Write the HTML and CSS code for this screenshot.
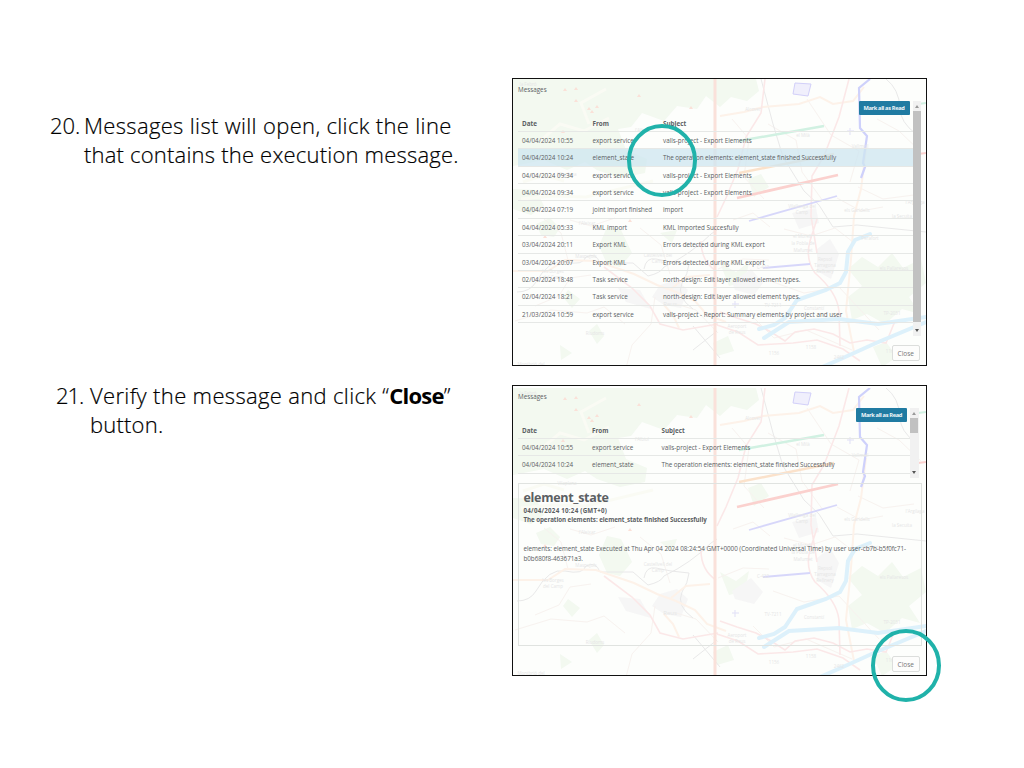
FILE: index.html
```
<!DOCTYPE html>
<html lang="en">
<head>
<meta charset="utf-8">
<title>Messages guide</title>
<link rel="stylesheet" href="styles.css">
</head>
<body>
<svg class="defs" width="0" height="0" aria-hidden="true">
<defs>
<symbol id="map" viewBox="0 0 413 289">
<rect width="413" height="289" fill="#fdfefc"/>
<g fill="#f1f8ee">
<path d="M0 0H210V10L193 17L184 30L164 27L151 42L129 34L118 48L105 50L113 71L134 80L132 94L107 99L84 91L72 83L54 91L31 81L0 87Z"/>
<path d="M202 0H243L246 12L234 22L218 18L207 28L193 17ZM0 110L23 111L31 127L18 136L0 130ZM23 145L37 139L47 149L41 158L28 156ZM94 148L108 151L119 174L107 188L94 185L86 167ZM207 184L223 193L236 183L232 203L216 207ZM335 190L349 178L365 188L379 174L390 189L408 180L413 204L396 218L407 235L389 230L372 245L354 235L339 241L335 218L349 207ZM235 100L248 95L256 108L241 118ZM55 211L67 220L59 229L50 218ZM47 266L59 274L48 281ZM76 252L84 245L91 257L84 265ZM200 264L215 257L221 272L204 277ZM360 268L373 263L384 278L369 288ZM147 154L164 151L159 164Z"/>
</g>
<g fill="#f5f5f5">
<path d="M147 206L164 201L175 211L168 229L151 226L139 218ZM105 209L127 211L138 230L113 223ZM219 203L238 190L250 204L241 216L222 211ZM304 170L317 160L326 175L318 200L304 192ZM279 134L303 129L306 144L286 150Z"/>
</g>
<g fill="none" stroke="#fafbf3" stroke-width="3">
<path d="M28 61L47 45L71 52L96 39M93 10L68 24L76 45M8 120L40 117L73 118L140 102M10 103L31 96L51 102"/>
</g>
<g fill="none" stroke="#f7f1ed">
<path d="M31 140L48 154L55 181M22 227L46 217L57 199L78 196M2 242L38 231L74 234L91 228L112 245M57 141L78 147L102 139M127 149L148 166L157 195M163 225L183 231L205 254M142 218L138 245L119 266L113 289M205 190L230 180L256 181M219 40L236 60L231 98L251 120M294 20L318 56L346 72L337 103M364 40L386 52L408 73M345 108L370 120L401 116M324 119L348 132L370 128M255 45L283 61L289 93L310 122M271 150L298 157L322 149L340 163M220 141L240 134L257 148M240 238L261 259L293 251L339 271M260 203L291 214L326 208L366 251"/>
</g>
<g fill="none" stroke="#e6e6e6">
<path d="M4 213Q17 213 23 203Q36 180 52 183Q70 187 73 178Q83 173 87 184L120 184L135 197Q148 194 151 188Q178 175 198 155L204 151M131 190Q133 178 143 180L158 183L176 185Q175 195 169 204Q163 218 180 230M180 247L207 279M180 271L204 252"/>
<path d="M248 0L260 45L270 78L291 112L306 126L320 148L344 146L413 153"/>
<path d="M373 0Q386 10 387 29Q387 43 403 55"/>
</g>
<g fill="none" stroke="#fdf0e6" stroke-width="2">
<path d="M0 192L35 192L52 181L83 182L121 195L144 206L163 213L182 222L194 236L213 243"/>
<path d="M207 37L231 33L250 28L286 25L307 18L320 25L340 22L351 8M158 210L173 198L197 196M151 226L160 236L166 249M353 70L348 110L341 137L338 180L333 232L341 273"/>
</g>
<g fill="none" stroke="#fbe5e5" stroke-width="1.6">
<path d="M91 188L119 209L137 227L147 245L170 251L205 245M207 233L224 239L243 245L258 253L272 262L282 253L301 250L320 255L337 264L354 261L373 264L382 242M204 246L225 253L245 266L280 264L304 261L330 270L347 282"/>
<path d="M252 0L248 34L233 58L225 90L213 119L204 138M336 0L326 38L311 77L299 97L298 137L304 174M304 140L297 162Q292 180 302 194Q324 213 326 232L327 267"/>
<path d="M188 162Q188 182 203 192"/>
</g>
<path d="M202 0V289" stroke="#fadcd4" stroke-width="3"/>
<g fill="none" stroke="#d8effb" stroke-width="4" stroke-linecap="round">
<path d="M357 155L342 161L335 173L333 193L327 204L313 211L284 221L272 239L261 246L246 250M251 259L276 243L326 240L365 245L413 238M307 289L330 279L363 264L413 243"/>
</g>
<path d="M226 62L311 47" stroke="#c9efdd" stroke-width="2.5"/>
<path d="M226 94L321 75" stroke="#fbdec3" stroke-width="2.5"/>
<path d="M224 119L325 96" stroke="#fbcac6" stroke-width="2.8"/>
<path d="M236 142L324 117M250 189L297 185" stroke="#d1d1fa" stroke-width="1.8"/>
<path d="M357 0L346 9L347 49L354 57L350 84L352 88L348 99" fill="none" stroke="#c6c9fb" stroke-width="2.2"/>
<path d="M282 4L298 5L295 17L280 15Z" fill="#eeedfc" stroke="#cbc8f9"/>
<g fill="#fbdcd2"><path d="M52 9l2 3h-4zM63 20l2 3h-4zM76 28l2 3h-4zM84 26l2 3h-4zM79 31l2 3h-4zM50 51l2 3h-4zM63 8l2 3h-4zM126 15l2 3h-4zM178 27l2 3h-4zM32 156l2 3h-4zM117 140l2 3h-4z"/></g>
<path d="M405 25l8 -1" stroke="#c9efdd" stroke-width="2"/>
<path d="M405 75l8 -1" stroke="#fbcac6" stroke-width="2"/>
<path d="M337 49v7M334 52h7M222 222v7M219 225h7" stroke="#dcdbf6"/>
<g class="place" text-anchor="middle">
<text x="15" y="7">la Febró</text><text x="54" y="97">Vilaplana</text><text x="129" y="53">l'Albiol</text><text x="74" y="146">l'Aleixar</text><text x="240" y="32">Alcover</text><text x="290" y="58">el Milà</text><text x="347" y="69">Vallmoll</text><text x="289" y="129">Vilallonga del</text><text x="289" y="135">Camp</text><text x="344" y="133">els Garidells</text><text x="389" y="139">la Secuita</text><text x="402" y="125">l'Argilaga</text><text x="73" y="179">Maspujols</text><text x="145" y="178">Castellvell del</text><text x="145" y="184">Camp</text><text x="40" y="194">les Borges</text><text x="40" y="200">del Camp</text><text x="157" y="227" font-size="6">Reus</text><text x="82" y="256">Riudoms</text><text x="18" y="287">Montbrió del</text><text x="289" y="159">el Morell</text><text x="290" y="166">la Pobla de</text><text x="290" y="173">Mafumet</text><text x="312" y="182">Repsol</text><text x="312" y="188">Tarragona</text><text x="312" y="194">Refinery</text><text x="357" y="161">Perafort</text><text x="381" y="191">els Pallaresos</text><text x="250" y="190">C-422</text><text x="260" y="228">TV-7211</text><text x="301" y="231">Constantí</text><text x="379" y="236">TP-2031</text><text x="224" y="249">Aeroport</text><text x="224" y="255">de Reus</text><text x="261" y="276">1156</text><text x="298" y="270">1158</text><text x="326" y="280">2462</text><text x="378" y="274">1164</text>
</g>
</symbol>
</defs>
</svg>
<main class="page">
<section class="step">
<div class="copy first">
<span class="num">20.</span>
<p><span class="l1">Messages list will open, click the line</span><br><span class="l2">that contains the execution message.</span></p>
</div>
<div class="panel one">
<svg class="map"><use href="#map" width="413" height="289"/></svg>
<div class="content">
<div class="caption">Messages</div>
<div class="list">
<div class="table">
<div class="tools"><button class="mark">Mark all as Read</button></div>
<div class="row head"><span>Date</span><span>From</span><span>Subject</span></div>
<div class="row"><span>04/04/2024 10:55</span><span>export service</span><span>valls-project - Export Elements</span></div>
<div class="row active"><span>04/04/2024 10:24</span><span>element_state</span><span class="long">The operation elements: element_state finished Successfully</span></div>
<div class="row"><span>04/04/2024 09:34</span><span>export service</span><span>valls-project - Export Elements</span></div>
<div class="row"><span>04/04/2024 09:34</span><span>export service</span><span>valls-project - Export Elements</span></div>
<div class="row"><span>04/04/2024 07:19</span><span>joint import finished</span><span>import</span></div>
<div class="row"><span>04/04/2024 05:33</span><span>KML Import</span><span>KML Imported Succesfully</span></div>
<div class="row"><span>03/04/2024 20:11</span><span>Export KML</span><span>Errors detected during KML export</span></div>
<div class="row"><span>03/04/2024 20:07</span><span>Export KML</span><span>Errors detected during KML export</span></div>
<div class="row"><span>02/04/2024 18:48</span><span>Task service</span><span>north-design: Edit layer allowed element types.</span></div>
<div class="row"><span>02/04/2024 18:21</span><span>Task service</span><span>north-design: Edit layer allowed element types.</span></div>
<div class="row"><span>21/03/2024 10:59</span><span>export service</span><span>valls-project - Report: Summary elements by project and user</span></div>
</div>
<div class="scroll"><i class="up"></i><i class="thumb"></i><i class="down"></i></div>
</div>
<div class="footer"><button class="close">Close</button></div>
</div>
<svg class="ring" viewBox="0 0 70 73"><ellipse cx="35" cy="36.5" rx="33" ry="34.5"/></svg>
</div>
</section>
<section class="step">
<div class="copy second">
<span class="num">21.</span>
<p><span class="l1">Verify the message and click “<b>Close</b>”</span><br><span class="l2">button.</span></p>
</div>
<div class="panel two">
<svg class="map"><use href="#map" y="2" width="413" height="289"/></svg>
<div class="content">
<div class="caption">Messages</div>
<div class="list">
<div class="table">
<div class="tools"><button class="mark">Mark all as Read</button></div>
<div class="row head"><span>Date</span><span>From</span><span>Subject</span></div>
<div class="row"><span>04/04/2024 10:55</span><span>export service</span><span>valls-project - Export Elements</span></div>
<div class="row"><span>04/04/2024 10:24</span><span>element_state</span><span class="long">The operation elements: element_state finished Successfully</span></div>
</div>
<div class="scroll"><i class="up"></i><i class="thumb"></i><i class="down"></i></div>
</div>
<article class="detail">
<h2>element_state</h2>
<h3 class="when">04/04/2024 10:24 (GMT+0)</h3>
<h3 class="what">The operation elements: element_state finished Successfully</h3>
<p>elements: element_state Executed at Thu Apr 04 2024 08:24:54 GMT+0000 (Coordinated Universal Time) by user user-cb7b-b5f0fc71-<br>b0b680f8-463671a3.</p>
</article>
<div class="footer"><button class="close">Close</button></div>
</div>
<svg class="ring" viewBox="0 0 70 73"><ellipse cx="35" cy="36.5" rx="33" ry="34.5"/></svg>
</div>
</section>
</main>
</body>
</html>
```
FILE: styles.css
```
* { box-sizing: border-box; }
body { margin: 0; background: #fff; font-family: "Open Sans", sans-serif; }
.defs { position: absolute; }
.page { width: 1024px; height: 768px; padding-top: 78px; display: flex; flex-direction: column; gap: 19px; overflow: hidden; }
.step { display: flex; }
.copy { width: 512px; display: flex; color: #000; font-size: 22px; font-weight: 300; line-height: 29px; white-space: nowrap; -webkit-text-stroke: 0.2px #000; }
.copy p { margin: 0; }
.copy b { font-weight: 700; letter-spacing: -0.75px; -webkit-text-stroke: 0; }
.first { padding: 33px 0 0 50px; }
.second { margin-top: -4px; padding-left: 56px; }
.num { width: 34px; }
.second .num { letter-spacing: -1px; }
.l1 { letter-spacing: 0.34px; }
.l2 { letter-spacing: 0.2px; }
.panel { position: relative; width: 415px; border: 1px solid #111; color: #5b6063; font-size: 6.3px; }
.one { height: 288px; }
.two { height: 291px; }
.map { position: absolute; left: 0; top: 0; width: 100%; height: 100%; opacity: 0.85; }
.place { font-size: 4.5px; fill: #e2e2e2; }
.content { position: relative; height: 100%; padding: 6px 5px 0; display: flex; flex-direction: column; }
.caption { height: 16px; line-height: 9px; }
.list { display: flex; }
.table { width: 395px; }
.tools { height: 15px; display: flex; justify-content: flex-end; padding-right: 3px; }
button { font-family: inherit; margin: 0; padding: 0; text-align: center; white-space: nowrap; }
.mark { width: 51px; height: 14px; border: 0; border-radius: 1px; background: #207ba2; color: #f2f8fb; font-size: 5.7px; font-weight: 700; line-height: 14px; letter-spacing: -0.35px; }
.row { height: 17.4px; display: grid; grid-template-columns: 70.5px 70.5px 1fr; padding-left: 4px; border-bottom: 1px solid #e6e8e6; line-height: 18px; white-space: nowrap; }
.head { height: 15.8px; font-weight: 700; line-height: 15px; }
.active { background: rgba(205, 230, 240, 0.75); }
.long { letter-spacing: -0.06px; }
.scroll { width: 8.5px; background: #f1f1f1; display: flex; flex-direction: column; align-items: center; }
.up, .down { width: 0; height: 0; border-left: 2.5px solid transparent; border-right: 2.5px solid transparent; }
.up { border-bottom: 3px solid #999; margin: 4px 0 3px; }
.down { border-top: 3px solid #555; margin: auto 0 4px; }
.thumb { width: 8px; background: #c1c1c1; }
.one .list { height: 235px; }
.one .thumb { height: 211px; }
.two .list { height: 69.5px; }
.two .table { width: 392px; }
.two .row { grid-template-columns: 70px 69.5px 1fr; }
.two .thumb { height: 15px; }
.footer { display: flex; justify-content: flex-end; padding-right: 1px; }
.one .footer { padding-top: 9px; }
.close { width: 28.5px; height: 16px; border: 1px solid #dcdedc; border-radius: 2px; background: #fdfdfc; color: #777; font-size: 6.5px; line-height: 15px; }
.detail { width: 404px; height: 163px; margin: 5.5px 0 10px; padding: 5px 4.5px; border: 1px solid #e0e3e0; white-space: nowrap; }
.detail h2, .detail h3, .detail p { margin: 0; }
.detail h2 { font-size: 12.5px; line-height: 17px; letter-spacing: -0.3px; }
.detail h3 { font-size: 6.2px; line-height: 9.4px; }
.detail .when { letter-spacing: 0.25px; }
.detail .what { letter-spacing: -0.06px; }
.detail p { margin-top: 19.5px; line-height: 9.4px; letter-spacing: -0.045px; }
.ring { position: absolute; width: 70px; height: 73px; fill: none; stroke: #20b2aa; stroke-width: 4; }
.one .ring { left: 114px; top: 45px; }
.two .ring { left: 357.5px; top: 242.5px; }
```
